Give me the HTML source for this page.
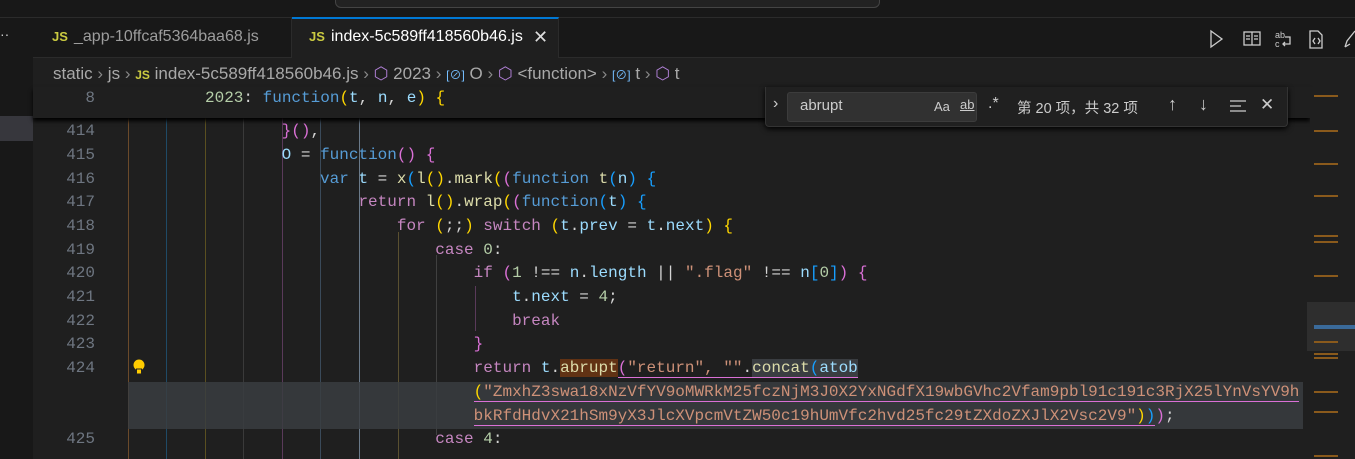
<!DOCTYPE html>
<html style="width:1355px;height:459px;overflow:hidden"><head><meta charset="utf-8"><style>
*{margin:0;padding:0;box-sizing:border-box}
body{width:1355px;height:459px;background:#1f1f1f;overflow:hidden;position:relative;font-family:"Liberation Sans","Noto Sans CJK SC",sans-serif;color:#ccc}
.abs{position:absolute}
.mono{font-family:"Liberation Mono","DejaVu Sans Mono",monospace;font-size:16px;white-space:pre}
.row{position:absolute;left:128px;height:23.67px;line-height:23.67px}
.ln{position:absolute;width:95px;text-align:right;color:#6e7681;font-family:"Liberation Mono",monospace;font-size:16px;line-height:23.67px;height:23.67px}
.k{color:#569cd6}.c{color:#c586c0}.v{color:#9cdcfe}.f{color:#dcdcaa}.s{color:#ce9178}.n{color:#b5cea8}.o{color:#d4d4d4}
.b1{color:#ffd700}.b2{color:#da70d6}.b3{color:#179fff}
.g{position:absolute;top:94px;width:1px;height:365px}
.mm{position:absolute;left:1331px;width:24px;height:2px;background:#8a5a1c}
</style></head><body>
<div class="abs" style="left:0;top:0;width:1355px;height:17px;background:#181818"></div>
<div class="abs" style="left:335px;top:-10px;width:545px;height:18px;border:1px solid #444;border-radius:6px;background:#222"></div>
<div class="abs" style="left:0;top:17px;width:1355px;height:1px;background:#2b2b2b"></div>
<div class="abs" style="left:0;top:18px;width:33px;height:441px;background:#181818"></div>
<div class="abs" style="left:0;top:116px;width:33px;height:25px;background:#37373d"></div>
<div class="abs" style="left:0;top:26px;color:#ccc;font-size:14px">··</div>
<div class="abs" style="left:33px;top:18px;width:1322px;height:40px;background:#181818;border-bottom:1px solid #2b2b2b"></div>
<div class="abs" style="left:33px;top:18px;width:259px;height:40px;border-right:1px solid #2b2b2b"></div>
<div class="abs" style="left:52px;top:29px;font-size:13px;font-weight:bold;color:#cbcb41">JS</div>
<div class="abs" style="left:74px;top:28px;font-size:16px;color:#9d9d9d">_app-10ffcaf5364baa68.js</div>
<div class="abs" style="left:292px;top:17px;width:267px;height:41px;background:#1f1f1f;border-top:2px solid #0078d4;border-right:1px solid #2b2b2b"></div>
<div class="abs" style="left:309px;top:29px;font-size:13px;font-weight:bold;color:#cbcb41">JS</div>
<div class="abs" style="left:331px;top:28px;font-size:16px;color:#fff">index-5c589ff418560b46.js</div>
<div class="abs" style="left:533px;top:27px;font-size:18px;color:#ddd">✕</div>
<svg class="abs" style="left:1205px;top:28px" width="150" height="22" fill="none" stroke="#ccc" stroke-width="1.3">
<path d="M6 3 L17 11 L6 19 Z"/>
<rect x="39" y="4" width="16" height="13"/><path d="M47 4v13M41 8h4M41 11h4M49 8h4M49 11h4"/>
<text x="70" y="10" fill="#ccc" stroke="none" font-size="9" font-family="Liberation Sans">ab</text><text x="70" y="19" fill="#ccc" stroke="none" font-size="9" font-family="Liberation Sans">c</text><path d="M80 9h5v7h-7M80 14l-2 2 2 2"/>
<path d="M105 3h8l4 4v13h-12Z M110 10l-2 3 2 3M113 10l2 3-2 3"/>
<path d="M140 19l2-6 8-10M140 19l5-3"/>
</svg>
<div class="abs" style="left:53px;top:64px;font-size:17px;color:#a9a9a9;white-space:nowrap">static <span style="color:#888">›</span> js <span style="color:#888">›</span> <b style="color:#cbcb41;font-size:12px">JS</b> index-5c589ff418560b46.js <span style="color:#888">›</span> <span style="color:#b180d7">⬡</span> 2023 <span style="color:#888">›</span> <span style="color:#75beff;font-size:12px">[⊘]</span> O <span style="color:#888">›</span> <span style="color:#b180d7">⬡</span> &lt;function&gt; <span style="color:#888">›</span> <span style="color:#75beff;font-size:12px">[⊘]</span> t <span style="color:#888">›</span> <span style="color:#b180d7">⬡</span> t</div>
<div class="g" style="left:128px;background:#6b4a2a"></div>
<div class="g" style="left:166px;background:#1f4a66"></div>
<div class="g" style="left:205px;background:#5a4f20"></div>
<div class="g" style="left:243px;background:#3a3a3a"></div>
<div class="g" style="left:282px;background:#5a3a5a"></div>
<div class="g" style="left:320px;background:#3a4a5a"></div>
<div class="g" style="left:359px;background:#6a7a8a"></div>
<div class="g" style="left:398px;background:#5a5030;top:232px;height:227px"></div>
<div class="g" style="left:436px;background:#404040;top:255px;height:180px"></div>
<div class="g" style="left:475px;background:#5a3a5a;top:286px;height:45px"></div>
<div class="abs" style="left:128px;top:382px;width:1175px;height:47px;background:#3a3d41;opacity:.85"></div>
<div class="ln" style="top:120px">414</div>
<div class="ln" style="top:144px">415</div>
<div class="ln" style="top:168px">416</div>
<div class="ln" style="top:191px">417</div>
<div class="ln" style="top:215px">418</div>
<div class="ln" style="top:239px">419</div>
<div class="ln" style="top:262px">420</div>
<div class="ln" style="top:286px">421</div>
<div class="ln" style="top:310px">422</div>
<div class="ln" style="top:333px">423</div>
<div class="ln" style="top:357px">424</div>
<div class="ln" style="top:428px">425</div>
<svg class="abs" style="left:131px;top:358px" width="16" height="18"><circle cx="8" cy="7" r="5.5" fill="#ffcc00"/><rect x="5.5" y="11" width="5" height="5" fill="#ffcc00" stroke="#222" stroke-width="1"/></svg>
<div class="mono">
<div class="row" style="top:96px">                <span class="v">S</span> <span class="o">=</span> <span class="k">function</span><span class="b2">()</span> <span class="b2">{</span></div>
<div class="row" style="top:120px">                <span class="b2">}()</span><span class="o">,</span></div>
<div class="row" style="top:144px">                <span class="v">O</span> <span class="o">=</span> <span class="k">function</span><span class="b2">()</span> <span class="b2">{</span></div>
<div class="row" style="top:168px">                    <span class="k">var</span> <span class="v">t</span> <span class="o">=</span> <span class="f">x</span><span class="b3">(</span><span class="f">l</span><span class="b1">()</span><span class="o">.</span><span class="f">mark</span><span class="b1">(</span><span class="b2">(</span><span class="k">function</span> <span class="f">t</span><span class="b3">(</span><span class="v">n</span><span class="b3">)</span> <span class="b3">{</span></div>
<div class="row" style="top:191px">                        <span class="c">return</span> <span class="f">l</span><span class="b1">()</span><span class="o">.</span><span class="f">wrap</span><span class="b1">(</span><span class="b2">(</span><span class="k">function</span><span class="b3">(</span><span class="v">t</span><span class="b3">)</span> <span class="b3">{</span></div>
<div class="row" style="top:215px">                            <span class="c">for</span> <span class="b1">(</span><span class="o">;;</span><span class="b1">)</span> <span class="c">switch</span> <span class="b1">(</span><span class="v">t</span><span class="o">.</span><span class="v">prev</span> <span class="o">=</span> <span class="v">t</span><span class="o">.</span><span class="v">next</span><span class="b1">)</span> <span class="b1">{</span></div>
<div class="row" style="top:239px">                                <span class="c">case</span> <span class="n">0</span><span class="o">:</span></div>
<div class="row" style="top:262px">                                    <span class="c">if</span> <span class="b2">(</span><span class="n">1</span> <span class="o">!==</span> <span class="v">n</span><span class="o">.</span><span class="v">length</span> <span class="o">||</span> <span class="s">".flag"</span> <span class="o">!==</span> <span class="v">n</span><span class="b3">[</span><span class="n">0</span><span class="b3">]</span><span class="b2">)</span> <span class="b2">{</span></div>
<div class="row" style="top:286px">                                        <span class="v">t</span><span class="o">.</span><span class="v">next</span> <span class="o">=</span> <span class="n">4</span><span class="o">;</span></div>
<div class="row" style="top:310px">                                        <span class="c">break</span></div>
<div class="row" style="top:333px">                                    <span class="b2">}</span></div>
<div class="row" style="top:357px">                                    <span class="c">return</span> <span class="v">t</span><span class="o">.</span><span class="f" style="background:#613214">abrupt</span><span class="b2" style="border-bottom:1px solid #da70d6">(</span><span class="s" style="border-bottom:1px solid #da70d6">"return", ""</span><span class="o" style="border-bottom:1px solid #da70d6">.</span><span class="f" style="background:#3a3d41;border-bottom:1px solid #da70d6">concat</span><span class="b3" style="background:#3a3d41;border-bottom:1px solid #da70d6">(</span><span class="v" style="background:#3a3d41;border-bottom:1px solid #da70d6">atob</span></div>
<div class="row" style="top:381px">                                    <span style="border-bottom:1px solid #da70d6"><span class="b1">(</span><span class="s">"ZmxhZ3swa18xNzVfYV9oMWRkM25fczNjM3J0X2YxNGdfX19wbGVhc2Vfam9pbl91c191c3RjX25lYnVsYV9h</span></span></div>
<div class="row" style="top:405px">                                    <span style="border-bottom:1px solid #da70d6"><span class="s">bkRfdHdvX21hSm9yX3JlcXVpcmVtZW50c19hUmVfc2hvd25fc29tZXdoZXJlX2Vsc2V9"</span><span class="b1">)</span><span class="b3">)</span></span><span class="b2">)</span><span class="o">;</span></div>
<div class="row" style="top:428px">                                <span class="c">case</span> <span class="n">4</span><span class="o">:</span></div>
</div>
<div class="abs" style="left:33px;top:87px;width:1277px;height:31px;background:#1f1f1f;box-shadow:0 3px 4px #000"></div>
<div class="ln" style="top:87px;left:0">8</div>
<div class="abs mono" style="left:205px;top:86px;line-height:24px"><span class="n">2023</span><span class="o">:</span> <span class="k">function</span><span class="b1">(</span><span class="v">t</span><span class="o">,</span> <span class="v">n</span><span class="o">,</span> <span class="v">e</span><span class="b1">)</span> <span class="b1">{</span></div>
<div class="abs" style="left:1310px;top:87px;width:45px;height:372px;background:#1f1f1f"></div>
<div class="abs" style="left:1307px;top:302px;width:48px;height:49px;background:#2e2e2e"></div>
<div class="abs" style="left:1314px;top:325px;width:41px;height:4px;background:#3a6a9a"></div>
<div class="mm" style="left:1314px;top:95px"></div><div class="mm" style="left:1314px;top:130px"></div>
<div class="mm" style="left:1314px;top:163px"></div><div class="mm" style="left:1314px;top:195px"></div>
<div class="mm" style="left:1314px;top:235px"></div><div class="mm" style="left:1314px;top:241px"></div>
<div class="mm" style="left:1314px;top:275px"></div><div class="mm" style="left:1314px;top:341px"></div>
<div class="mm" style="left:1314px;top:353px"></div><div class="mm" style="left:1314px;top:357px"></div>
<div class="mm" style="left:1314px;top:391px"></div><div class="mm" style="left:1314px;top:411px"></div>
<div class="mm" style="left:1314px;top:455px"></div>
<div class="abs" style="left:765px;top:87px;width:523px;height:40px;background:#202020;border:1px solid #333;border-top:none;box-shadow:0 2px 6px #000;border-radius:0 0 4px 4px"></div>
<div class="abs" style="left:773px;top:95px;font-size:16px;color:#ccc">›</div>
<div class="abs" style="left:787px;top:92px;width:190px;height:30px;background:#313131;border:1px solid #3c3c3c;border-radius:3px"></div>
<div class="abs" style="left:800px;top:97px;font-size:15px;color:#ccc">abrupt</div>
<div class="abs" style="left:934px;top:99px;font-size:13px;color:#ccc">Aa</div>
<div class="abs" style="left:960px;top:97px;font-size:13px;color:#ccc;text-decoration:underline">ab</div>
<div class="abs" style="left:988px;top:95px;font-size:16px;color:#ccc">.*</div>
<div class="abs" style="left:1017px;top:97px;font-size:14.5px;color:#ccc">第 20 项，共 32 项</div>
<div class="abs" style="left:1168px;top:94px;font-size:18px;color:#ccc">↑</div>
<div class="abs" style="left:1199px;top:94px;font-size:18px;color:#ccc">↓</div>
<svg class="abs" style="left:1229px;top:99px" width="18" height="14" stroke="#ccc" stroke-width="1.3"><path d="M1 2h16M1 7h11M1 12h16"/></svg>
<div class="abs" style="left:1260px;top:95px;font-size:17px;color:#ccc">✕</div>
</body></html>
